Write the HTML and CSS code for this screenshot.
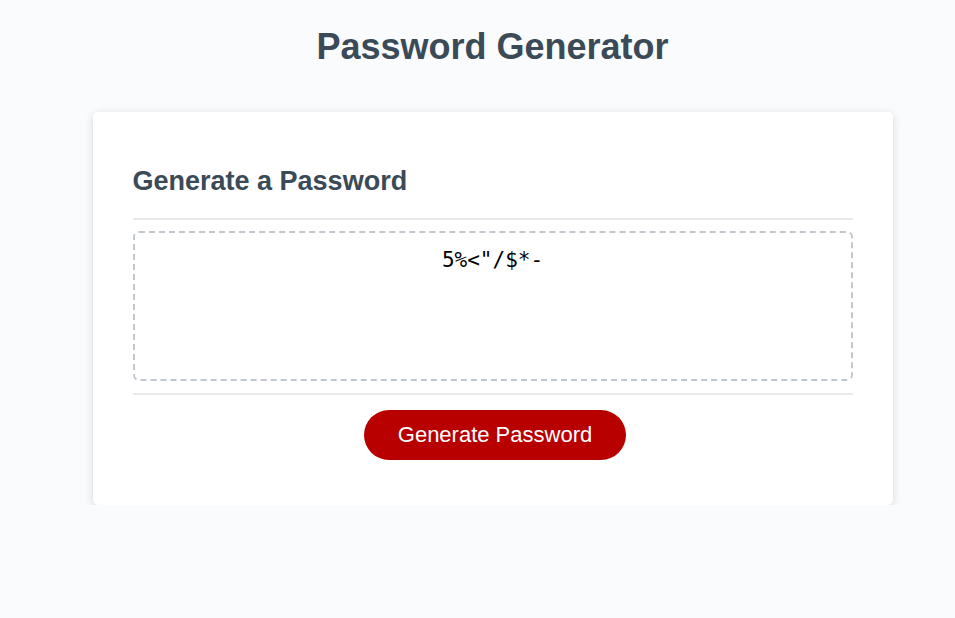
FILE: index.html
```html
<!DOCTYPE html>
<html lang="en">
<head>
<meta charset="UTF-8">
<title>Password Generator</title>
<link rel="stylesheet" href="styles.css">
</head>
<body>
<div class="wrapper">
  <header class="page-header">
    <h1>Password Generator</h1>
  </header>
  <div class="card">
    <div class="card-header">
      <h2>Generate a Password</h2>
    </div>
    <div class="card-body">
      <textarea readonly class="password" aria-label="Generated Password">5%&lt;"/$*-</textarea>
    </div>
    <div class="card-footer">
      <button class="btn">Generate Password</button>
    </div>
  </div>
</div>
</body>
</html>
```
FILE: styles.css
```css
* { box-sizing: border-box; }

html, body {
  margin: 0;
  padding: 0;
}

body {
  font-family: "Liberation Sans", Arial, sans-serif;
  background-color: #f9fbfd;
  font-size: 18px;
}

.wrapper {
  padding: 26px 20px 0 50px;
}

.page-header {
  text-align: center;
}

.page-header h1 {
  margin: 0 0 44px;
  font-size: 36px;
  font-weight: bold;
  color: #3a4a57;
}

.card {
  background-color: #fff;
  border-radius: 5px;
  box-shadow: rgba(0, 0, 0, 0.15) 0 2px 8px 0;
  color: #3a4a57;
  max-width: 800px;
  margin: 0 auto;
  padding: 30px 40px 29px;
}

.card-header h2 {
  margin: 24px 0 21px;
  font-size: 27px;
  font-weight: bold;
}

.card-header::after,
.card-footer::before {
  content: "";
  display: block;
  height: 2px;
  background: #e7e9eb;
}

.card-body {
  min-height: 100px;
}

.password {
  display: block;
  width: 100%;
  height: 150px;
  margin: 11px 0 12px;
  padding: 15px;
  font-family: "DejaVu Sans Mono", "Liberation Mono", monospace;
  font-size: 21px;
  text-align: center;
  color: #000;
  background: #fff;
  border: 2px dashed #c0c7cf;
  border-radius: 6px;
  resize: none;
  overflow: hidden;
  outline: none;
}

.card-footer {
  text-align: center;
}

.btn {
  border: none;
  background-color: #b80000;
  border-radius: 25px;
  color: #fff;
  display: inline-block;
  font-family: "Liberation Sans", Arial, sans-serif;
  font-size: 22px;
  line-height: 22px;
  margin: 15px 16px 16px 21px;
  padding: 14px 34px;
  cursor: pointer;
}
```
